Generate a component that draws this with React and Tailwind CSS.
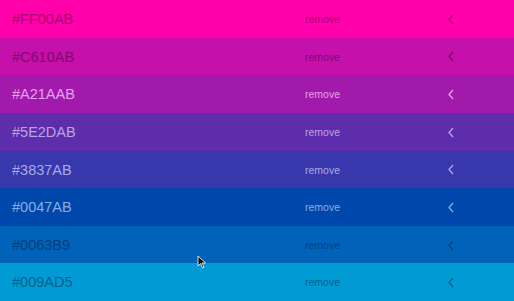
const colors = [
  { hex: '#FF00AB', bg: 'bg-[#ff00ab]', fg: 'text-[#a6006f]' },
  { hex: '#C610AB', bg: 'bg-[#c610ab]', fg: 'text-[#800a6f]' },
  { hex: '#A21AAB', bg: 'bg-[#a21aab]', fg: 'text-[#e4a2ea]' },
  { hex: '#5E2DAB', bg: 'bg-[#5e2dab]', fg: 'text-[#bba4e4]' },
  { hex: '#3837AB', bg: 'bg-[#3837ab]', fg: 'text-[#a6aaea]' },
  { hex: '#0047AB', bg: 'bg-[#0047ab]', fg: 'text-[#86ade6]' },
  { hex: '#0063B9', bg: 'bg-[#0063b9]', fg: 'text-[#003f7a]' },
  { hex: '#009AD5', bg: 'bg-[#009ad5]', fg: 'text-[#00618c]' },
];

const Chevron = () => (
  <svg width="8" height="11" viewBox="0 0 8 11" fill="none" stroke="currentColor" strokeWidth="1.3">
    <polyline points="6,1 2,5.5 6,10" />
  </svg>
);

export default function App() {
  return (
    <div className="relative flex h-[301px] w-[514px] flex-col overflow-hidden font-['Liberation_Sans',Arial,sans-serif]">
      {colors.map((c) => (
        <div key={c.hex} className={`flex flex-1 items-center pt-px ${c.bg} ${c.fg}`}>
          <div className="w-[305px] pl-[12px] text-[14.5px] leading-none">{c.hex}</div>
          <div className="w-[142px] text-[10.5px] leading-none">remove</div>
          <div className="flex flex-1 items-center">
            <Chevron />
          </div>
        </div>
      ))}
      <svg className="absolute left-[197px] top-[255px]" width="10" height="14" viewBox="0 0 10 14">
        <path d="M1 1 L1 11 L3.5 8.5 L5.5 13 L7 12.3 L5 8 L8.5 8 Z" fill="#111" stroke="#fff" strokeWidth="0.8" />
      </svg>
    </div>
  );
}
